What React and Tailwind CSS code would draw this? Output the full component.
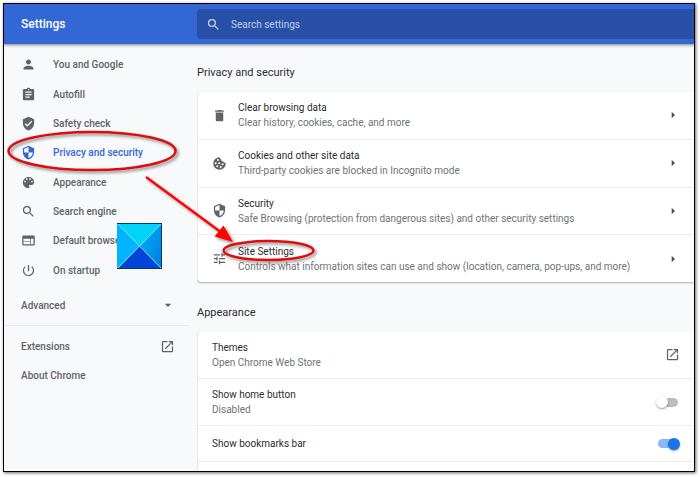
import React, { useState } from "react";
import {
  MdArrowDropDown,
  MdArrowRight,
  MdAssignment,
  MdDelete,
  MdOpenInNew,
  MdPerson,
  MdPowerSettingsNew,
  MdSearch,
  MdSecurity,
  MdTune,
  MdVerifiedUser,
  MdWeb,
} from "react-icons/md";

const PaletteIcon = ({ className }) => (
  <svg className={className} viewBox="0 0 24 24" fill="currentColor" aria-hidden="true">
    <path d="M12 3c-4.970 0-9 4.030-9 9s4.030 9 9 9c.83 0 1.500-.67 1.500-1.500 0-.39-.15-.74-.39-1.010-.23-.26-.38-.61-.38-.99 0-.83.67-1.500 1.500-1.500H16c2.760 0 5-2.240 5-5 0-4.420-4.030-8-9-8zm-5.500 9c-.83 0-1.500-.67-1.500-1.500S5.670 9 6.500 9 8 9.670 8 10.500 7.330 12 6.500 12zm3-4C8.670 8 8 7.330 8 6.500S8.670 5 9.500 5s1.500.67 1.500 1.500S10.330 8 9.500 8zm5 0c-.83 0-1.500-.67-1.500-1.500S13.670 5 14.500 5s1.500.67 1.500 1.500S15.330 8 14.500 8zm3 4c-.83 0-1.500-.67-1.500-1.500S16.670 9 17.500 9s1.500.67 1.500 1.500-.67 1.500-1.500 1.500z" />
  </svg>
);

const CookieIcon = ({ className }) => (
  <svg className={className} viewBox="0 0 24 24" aria-hidden="true">
    <path
      d="M12 2a10 10 0 1 0 10 10c0-.5 0-.9-.1-1.400-1.500.5-3.200-.2-3.700-1.900-2.300.4-4-1.300-3.500-3.400C13.200 4.900 12.300 3.500 12.500 2z"
      fill="currentColor"
    />
    <g fill="#fff">
      <circle cx="9.500" cy="6.500" r="1.600" />
      <circle cx="5.800" cy="11.500" r="1.600" />
      <circle cx="11.500" cy="11.500" r="1.600" />
      <circle cx="8.500" cy="16.500" r="1.600" />
      <circle cx="14" cy="17.500" r="1.600" />
      <circle cx="17" cy="13.200" r="1.600" />
    </g>
  </svg>
);

const navItems = [
  { label: "You and Google", icon: MdPerson },
  { label: "Autofill", icon: MdAssignment },
  { label: "Safety check", icon: MdVerifiedUser },
  { label: "Privacy and security", icon: MdSecurity, active: true },
  { label: "Appearance", icon: PaletteIcon },
  { label: "Search engine", icon: MdSearch },
  { label: "Default browser", icon: MdWeb },
  { label: "On startup", icon: MdPowerSettingsNew },
];

const privacyRows = [
  {
    title: "Clear browsing data",
    text: "Clear history, cookies, cache, and more",
    icon: MdDelete,
  },
  {
    title: "Cookies and other site data",
    text: "Third-party cookies are blocked in Incognito mode",
    icon: CookieIcon,
  },
  {
    title: "Security",
    text: "Safe Browsing (protection from dangerous sites) and other security settings",
    icon: MdSecurity,
  },
  {
    title: "Site Settings",
    text: "Controls what information sites can use and show (location, camera, pop-ups, and more)",
    icon: MdTune,
  },
];

const Toggle = ({ id, defaultChecked }) => {
  const [checked, setChecked] = useState(defaultChecked);

  return (
    <span className="relative flex h-3 w-6 items-center">
      <input
        id={id}
        type="checkbox"
        role="switch"
        checked={checked}
        onChange={(event) => setChecked(event.target.checked)}
        className="peer mx-auto h-[9px] w-5 appearance-none rounded-full bg-[#bdbdbf] checked:bg-[#8cb6f5]"
      />
      <span className="pointer-events-none absolute left-0 size-3 rounded-full bg-white shadow-[0_1px_2px_rgba(0,0,0,0.4)] peer-checked:left-3 peer-checked:bg-[#1a73e8]" />
    </span>
  );
};

const Sidebar = () => (
  <aside className="w-[193px] shrink-0 pt-[6px] text-[10px] font-medium text-[#5f6368]">
    <nav className="flex h-[235px] flex-col">
      {navItems.map(({ label, icon: Icon, active }) => (
        <a
          key={label}
          href="#"
          className={
            active
              ? "flex flex-1 items-center gap-[17px] pl-[17px] text-[#3367d6]"
              : "flex flex-1 items-center gap-[17px] pl-[17px]"
          }
        >
          <Icon className="size-[15px]" />
          {label}
        </a>
      ))}
    </nav>
    <button className="flex h-10 w-full items-center justify-between pr-[21px] pl-[17px]">
      Advanced
      <MdArrowDropDown className="size-4" />
    </button>
    <div className="mr-2 border-t border-[#e8eaed]" />
    <div className="flex flex-col pt-[6px]">
      <a href="#" className="flex h-[29px] items-center justify-between pr-[22px] pl-[17px]">
        Extensions
        <MdOpenInNew className="size-[15px]" />
      </a>
      <a href="#" className="flex h-[29px] items-center pl-[17px]">
        About Chrome
      </a>
    </div>
  </aside>
);

const SettingText = ({ title, text }) => (
  <span className="flex flex-col text-left leading-[15px]">
    <span className="text-[#2b2d30]">{title}</span>
    {text && <span className="text-[#6f7377]">{text}</span>}
  </span>
);

const Card = ({ children }) => (
  <div className="rounded-l-sm border-l border-[#e4e6e8] bg-white shadow-[0_1px_2px_rgba(60,64,67,0.4)]">
    {children}
  </div>
);

const Annotations = () => (
  <svg
    className="pointer-events-none absolute top-0 left-0 h-[477px] w-[700px]"
    viewBox="0 0 700 477"
    fill="none"
    aria-hidden="true"
  >
    <defs>
      <filter id="shade" x="-10%" y="-20%" width="125%" height="150%">
        <feDropShadow dx="2" dy="2" stdDeviation="1.5" floodColor="#000" floodOpacity="0.45" />
      </filter>
      <linearGradient id="right" x1="0" y1="0" x2="1" y2="1">
        <stop offset="0" stopColor="#00b4f8" />
        <stop offset="1" stopColor="#0078e0" />
      </linearGradient>
    </defs>
    <g>
      <path d="M117 223h45v46h-45z" fill="#00b4ff" />
      <path d="M117 223h45l-22 23z" fill="#00d4f8" />
      <path d="M162 223v46l-22-23z" fill="url(#right)" />
      <path d="M117 269h45l-22-23z" fill="#0044d8" />
      <path d="M117 223l45 46M162 223l-45 46" stroke="#8ce4ff" />
      <path d="M117 223.500h45M161.500 223v46M117 268.500h45" stroke="#063a5c" />
    </g>
    <g stroke="#dc0f0f" filter="url(#shade)">
      <ellipse cx="92" cy="151" rx="83.500" ry="19" strokeWidth="2.500" />
      <ellipse cx="268.500" cy="250.500" rx="45" ry="9.500" strokeWidth="2.500" />
    </g>
    <g filter="url(#shade)">
      <path d="M146 177L222 233" stroke="#f00" strokeWidth="2.200" />
      <path d="M233 242L214.500 236.500L223.500 225.500z" fill="#f00" />
    </g>
  </svg>
);

const App = () => (
  <div className="relative h-screen bg-white pt-[3px] pr-[5px] pb-[5px] pl-[3px] font-[Roboto,sans-serif]">
    <div className="flex h-full flex-col overflow-hidden border border-black bg-[#f8f9fa] shadow-[1px_1px_3px_rgba(0,0,0,0.6)]">
      <header className="relative flex h-10 shrink-0 items-center bg-[#3367d6] shadow-[0_1px_3px_rgba(0,0,0,0.5)]">
        <h1 className="w-[193px] shrink-0 pl-[17px] text-[12px] font-medium text-white">Settings</h1>
        <label className="flex h-[30px] flex-1 items-center gap-[10px] rounded-l-sm bg-[#2850a7] pl-[9px] text-[#c5d3f0]">
          <MdSearch className="size-[15px]" />
          <input
            type="search"
            aria-label="Search settings"
            placeholder="Search settings"
            className="flex-1 bg-transparent text-[10px] outline-none placeholder:text-[#c0cff0]"
          />
        </label>
      </header>

      <div className="flex min-h-0 flex-1">
        <Sidebar />
        <main className="flex-1 overflow-hidden text-[10px]">
          <h2 className="mt-[21px] mb-[11px] text-[11px] leading-4 text-[#2b2d30]">Privacy and security</h2>
          <Card>
            <div className="flex h-[190px] flex-col divide-y divide-[#eceef0]">
              {privacyRows.map(({ title, text, icon: Icon }) => (
                <button key={title} className="flex w-full flex-1 items-center gap-[11px] pr-[13px] pl-[14px]">
                  <Icon className="size-[15px] shrink-0 text-[#5f6368]" />
                  <SettingText title={title} text={text} />
                  <MdArrowRight className="ml-auto size-4 shrink-0 text-[#4b4f53]" />
                </button>
              ))}
            </div>
          </Card>

          <h2 className="mt-[23px] mb-[10px] text-[11px] leading-4 text-[#2b2d30]">Appearance</h2>
          <Card>
            <div className="divide-y divide-[#eceef0]">
              <a href="#" className="flex h-12 items-center justify-between px-[14px]">
                <SettingText title="Themes" text="Open Chrome Web Store" />
                <MdOpenInNew className="size-[15px] text-[#5f6368]" />
              </a>
              <label htmlFor="home" className="flex h-[47px] items-center justify-between px-[14px]">
                <SettingText title="Show home button" text="Disabled" />
                <Toggle id="home" defaultChecked={false} />
              </label>
              <label htmlFor="bookmarks" className="flex h-9 items-center justify-between px-[14px]">
                <SettingText title="Show bookmarks bar" />
                <Toggle id="bookmarks" defaultChecked />
              </label>
              <div className="h-12" />
            </div>
          </Card>
        </main>
      </div>
    </div>
    <Annotations />
  </div>
);

export default App;
